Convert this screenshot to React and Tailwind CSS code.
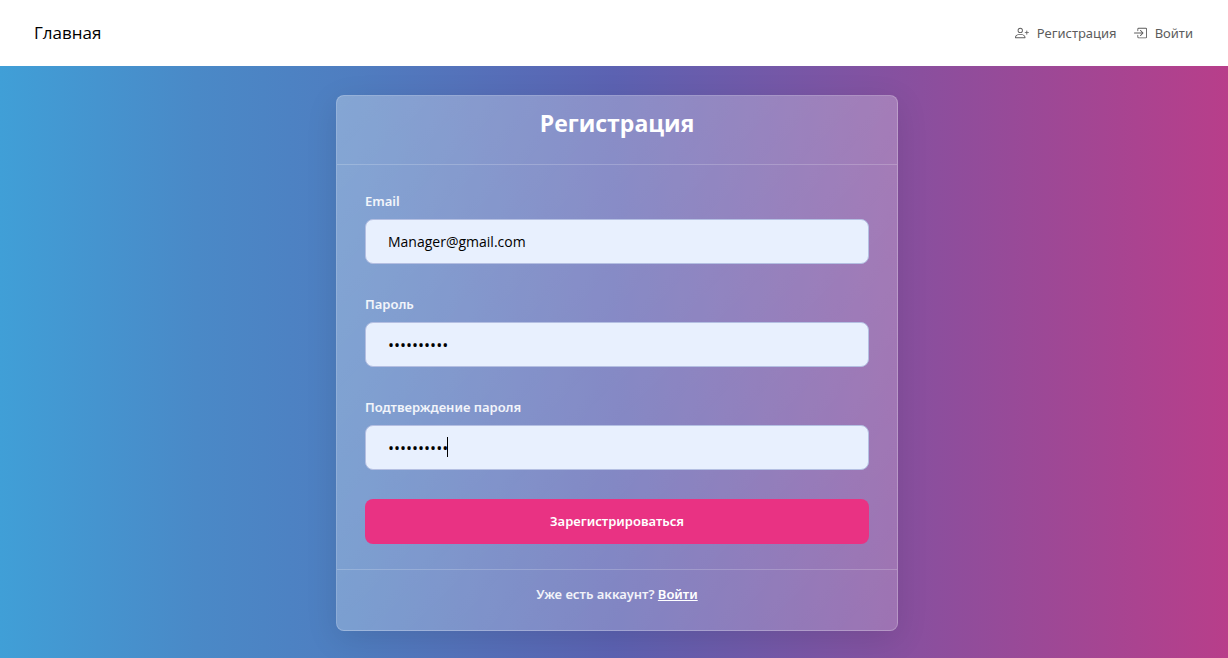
import { useState } from 'react';
import { BsPersonPlus, BsBoxArrowInRight } from 'react-icons/bs';

const inputClass =
  "block h-[45px] w-full rounded-lg border border-[#b4bfe2] bg-[#e8f0fe] px-[22px] font-['Open_Sans','Noto_Sans',sans-serif] text-black outline-none";

function NavLink({ href, icon: Icon, children }) {
  return (
    <a href={href} className="flex items-center gap-2 text-[13px] leading-5 text-[#5c5c5c]">
      <Icon className="size-[14px]" aria-hidden="true" />
      {children}
    </a>
  );
}

function Field({ id, label, type, initial, focused }) {
  const [value, setValue] = useState(initial);
  const textSize = type === 'password' ? 'text-base' : 'text-[14px]';
  return (
    <div className="mb-[29px]">
      <label htmlFor={id} className="mb-1.5 block text-[13px] font-semibold leading-[23px] text-white/90">
        {label}
      </label>
      <div className="relative">
        <input
          id={id}
          type={type}
          value={value}
          onChange={(e) => setValue(e.target.value)}
          className={`${inputClass} ${textSize}`}
        />
        {focused && (
          <span className="absolute left-[82px] top-3 h-5 w-px bg-black" aria-hidden="true" />
        )}
      </div>
    </div>
  );
}

export default function App() {
  return (
    <div className="flex min-h-screen flex-col font-['Noto_Sans','Open_Sans',sans-serif]">
      <header className="flex h-[66px] items-center justify-between bg-white pl-[34px] pr-[35px]">
        <a href="#home" className="font-['Open_Sans','Noto_Sans',sans-serif] text-[17px] leading-6 text-black">Главная</a>
        <nav className="flex items-center gap-4">
          <NavLink href="#register" icon={BsPersonPlus}>Регистрация</NavLink>
          <NavLink href="#login" icon={BsBoxArrowInRight}>Войти</NavLink>
        </nav>
      </header>

      <main className="flex grow justify-center bg-[linear-gradient(90deg,#409fd7_0%,#4a89c7_16%,#4f7dc0_29%,#5c62b2_50%,#8a4f9e_75%,#b83e8a_100%)] pb-[27px] pl-1.5 pt-[29px]">
        <div className="w-full max-w-[562px] self-start rounded-lg border border-white/20 bg-[linear-gradient(135deg,rgba(255,255,255,0.31),rgba(255,255,255,0.2))] shadow-[0_8px_32px_rgba(0,0,0,0.1)]">
          <h1 className="h-[69px] border-b border-white/20 pt-2.5 text-center font-['Open_Sans','Noto_Sans',sans-serif] text-[23px] font-bold leading-[34px] text-white">
            Регистрация
          </h1>
          <form className="px-7 py-[25px]" onSubmit={(e) => e.preventDefault()}>
            <Field id="email" label="Email" type="email" initial="Manager@gmail.com" />
            <Field id="password" label="Пароль" type="password" initial="1234567890" />
            <Field id="confirm" label="Подтверждение пароля" type="password" initial="1234567890" focused />
            <button type="submit" className="h-[45px] w-full rounded-lg bg-[#e93283] text-[13px] font-semibold text-white">
              Зарегистрироваться
            </button>
          </form>
          <p className="h-[61px] border-t border-white/20 pt-3.5 text-center text-[13px] font-semibold leading-5 text-white/90">
            Уже есть аккаунт?{' '}
            <a href="#login" className="text-white underline">Войти</a>
          </p>
        </div>
      </main>
    </div>
  );
}
